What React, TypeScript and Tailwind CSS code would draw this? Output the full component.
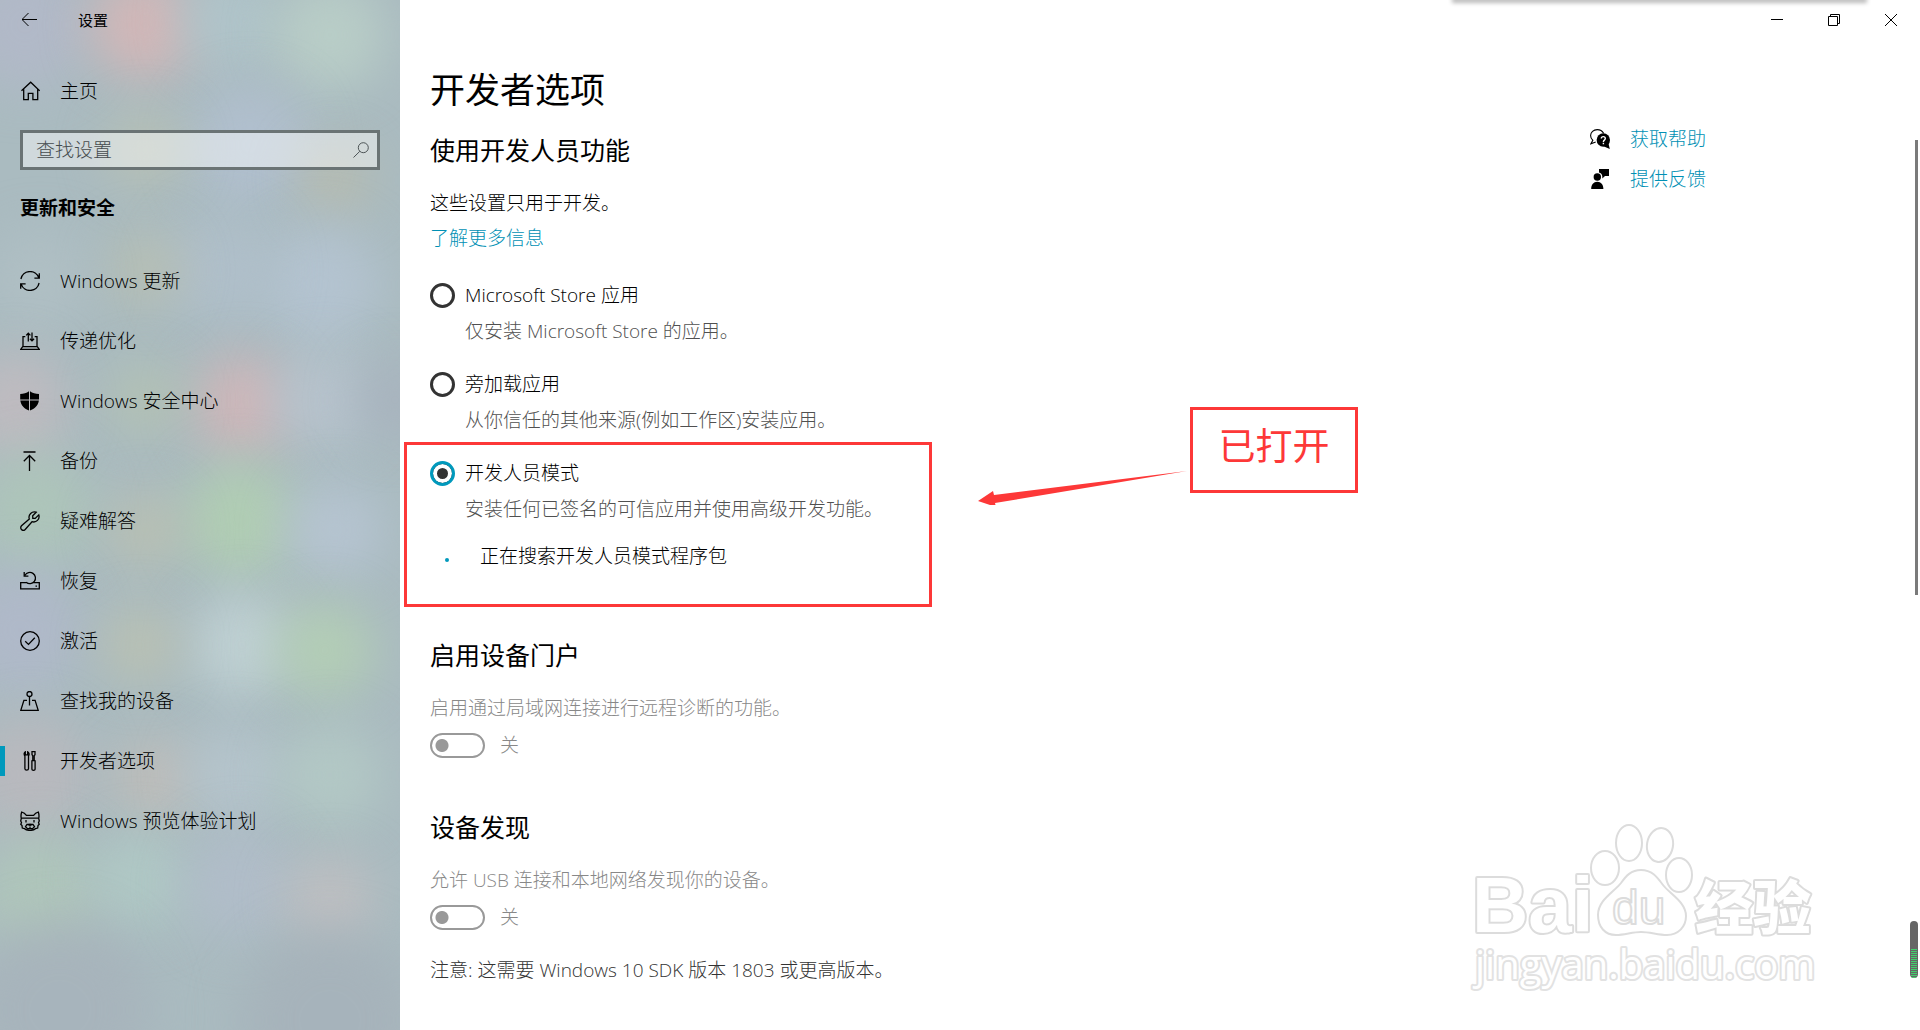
import { useState } from 'react'
import type { ReactNode } from 'react'

const blobs: [number, number, number, string][] = [
  [25, 25, 65, '#b3b9c9'], [145, 25, 54, '#d8b6b6'], [230, 20, 50, '#b0c6cb'], [330, 35, 56, '#bbd0c8'],
  [250, 145, 60, '#b2c0d0'], [145, 150, 38, '#bac1b2'], [335, 180, 36, '#b8bcae'],
  [320, 285, 60, '#b5c4d2'], [220, 270, 55, '#b0bfcb'], [145, 270, 38, '#b8c0b2'], [40, 280, 50, '#b0bfc4'],
  [15, 405, 54, '#c2bbbf'], [242, 405, 50, '#d4b6b8'], [145, 400, 38, '#b4c2b2'], [325, 400, 50, '#b9c4cf'],
  [240, 520, 58, '#b2d0b2'], [35, 510, 58, '#aec7b9'], [145, 530, 38, '#bbc1b0'], [335, 530, 48, '#b7c5d3'],
  [20, 630, 62, '#b0b8ca'], [242, 645, 52, '#c2d4d6'], [325, 650, 50, '#b4d0b4'], [140, 645, 38, '#bcc2b0'],
  [30, 775, 60, '#bbb8bd'], [155, 780, 42, '#c2bdb8'], [235, 775, 50, '#b6c6ce'], [330, 775, 52, '#b4cac6'],
  [40, 895, 60, '#b0c8ba'], [140, 880, 50, '#b0cac6'], [240, 885, 56, '#b2bdca'], [330, 900, 44, '#c2bfc2'],
  [60, 1010, 90, '#a7b3bb'], [330, 1020, 90, '#a6b2ba'], [395, 400, 40, '#a7b1bd'],
]

function Acrylic() {
  return (
    <svg className="absolute inset-0 -z-10 h-full w-full bg-[#aabbc0]" viewBox="0 0 400 1030" preserveAspectRatio="none" aria-hidden="true">
      <defs>
        <filter id="soft" x="-80%" y="-80%" width="260%" height="260%" colorInterpolationFilters="sRGB">
          <feGaussianBlur stdDeviation="24" />
        </filter>
      </defs>
      {blobs.map(([x, y, r, color], i) => (
        <circle key={i} cx={x} cy={y} r={r} fill={color} fillOpacity="0.85" filter="url(#soft)" />
      ))}
    </svg>
  )
}

function Icon({ children }: { children: ReactNode }) {
  return (
    <svg className="size-5 shrink-0" viewBox="0 0 20 20" fill="none" stroke="currentColor" strokeWidth="1.3" aria-hidden="true">
      {children}
    </svg>
  )
}

const navItems: { label: string; icon: ReactNode }[] = [
  {
    label: 'Windows 更新',
    icon: <Icon><path d="M.9 8A9.3 9.3 0 0 1 18.8 6.8M19.3 2.2v4.9h-4.9M19.1 12A9.3 9.3 0 0 1 1.2 13.2M.7 17.8v-4.9h4.9" /></Icon>,
  },
  {
    label: '传递优化',
    icon: <Icon><path d="M5.3 5.6H3v10M14.7 5.6H17v10M2.7 15.6h14.6l2 2.7H.7zM8.3 10.5V2.2M6.2 4.4l2.1-2.2 2.1 2.2M12 1.5v8.3M9.9 7.7 12 9.9l2.1-2.2" /></Icon>,
  },
  {
    label: 'Windows 安全中心',
    icon: (
      <Icon>
        <path fill="currentColor" stroke="none" d="M9 .2v8.4H.2V3C3.500 2.900 6.600 2 9 .2zM10 .2C12.400 2 15.500 2.900 19 3v5.600h-9zM.3 9.600H9v9.900C4.500 18 1 14.500.3 9.600zM10 9.600h8.900C18.200 14.500 14.500 18 10 19.500z" />
      </Icon>
    ),
  },
  { label: '备份', icon: <Icon><path d="M3.500 1h12M9.500 20V4.500M3.800 10.200l5.700-5.700 5.700 5.700" /></Icon> },
  {
    label: '疑难解答',
    icon: <Icon><path d="M16.200 1.200A5.400 5.400 0 0 0 9.300 8L1.500 14.800a2.600 2.600 0 1 0 3.700 3.700L12 10.700A5.400 5.400 0 0 0 18.800 3.900L15.200 7.400l-2.400-.1-.1-2.500z" /></Icon>,
  },
  {
    label: '恢复',
    icon: <Icon><path d="M6.800 11.600H.7v6.300h18.600v-6.300h-6.100M15.500 15.200h1.500M5 4.300a5.600 5.600 0 1 1 1.200 7M4.200 1v4.200h4.200" /></Icon>,
  },
  { label: '激活', icon: <Icon><circle cx="10" cy="10" r="9.300" /><path d="M5.200 10.200l3.300 3.200 6.300-6.600" /></Icon> },
  {
    label: '查找我的设备',
    icon: <Icon><circle cx="9.500" cy="3" r="2.500" /><path d="M9.500 5.500v9M7 9.300H3.900L.8 19.300h17.400L15.100 9.300H12" /></Icon>,
  },
  {
    label: '开发者选项',
    icon: (
      <Icon>
        <path d="M5.300.8v3h2.400v-3c1.400.7 1.900 2.700.8 4.200v12.800c0 1.900-3.600 1.900-3.600 0V5C3.700 3.500 4 1.500 5.300.8zM12 .7h3v3l-.8 1v5h-1.400v-5l-.8-1zM11.500 9.700h4M11.900 9.700v8.600c0 1.400 3.200 1.400 3.200 0V9.700" />
      </Icon>
    ),
  },
  {
    label: 'Windows 预览体验计划',
    icon: (
      <Icon>
        <path d="M1.700 1C1 3 .8 5.300 1.300 7.500L.7 10l.8 1.500-.7 1.800 1.200 1.200.3 2.600 2.300.6C6 19.200 8 19.400 10 19.400s4-.2 5.400-1.700l2.300-.6.300-2.600 1.200-1.200-.7-1.800.8-1.500-.6-2.500c.5-2.200.3-4.500-.4-6.500-2 .6-3.600 1.800-4.700 3.300H6.400C5.300 2.800 3.700 1.600 1.700 1zM1.300 7.200h17.400M6 9v2.500M14 9v2.500M7 13.500h6l1.500 2.200-2 2H7.500l-2-2zM10 15.500v2" />
        <path d="M8.600 13.800h2.800" strokeWidth="2" />
      </Icon>
    ),
  },
]

const modes = [
  { id: 'store', label: 'Microsoft Store 应用', desc: '仅安装 Microsoft Store 的应用。' },
  { id: 'sideload', label: '旁加载应用', desc: '从你信任的其他来源(例如工作区)安装应用。' },
  { id: 'developer', label: '开发人员模式', desc: '安装任何已签名的可信应用并使用高级开发功能。' },
]

function ModeOption({ mode, checked, onSelect }: { mode: (typeof modes)[number]; checked: boolean; onSelect: (id: string) => void }) {
  return (
    <div>
      <div className="flex items-center gap-[10px]">
        <input
          type="radio"
          name="mode"
          id={mode.id}
          checked={checked}
          onChange={() => onSelect(mode.id)}
          className="size-[25px] appearance-none rounded-full border-3 border-[#333] checked:border-[#0099bc] checked:bg-[#333] checked:shadow-[inset_0_0_0_4px_white]"
        />
        <label htmlFor={mode.id}>{mode.label}</label>
      </div>
      <p className="mt-2 pl-[35px] text-[#505050]">{mode.desc}</p>
    </div>
  )
}

function ToggleSection({ id, title, desc }: { id: string; title: string; desc: string }) {
  return (
    <section>
      <h2 className="text-[25px] leading-8 font-normal">{title}</h2>
      <p className="mt-[23px] text-[#888]" id={`${id}-desc`}>{desc}</p>
      <div className="mt-[9px] flex items-center gap-[15px] text-[#888]">
        <input
          type="checkbox"
          role="switch"
          id={id}
          disabled
          aria-describedby={`${id}-desc`}
          className="h-[25px] w-[55px] appearance-none rounded-full border-2 border-[#999] bg-[radial-gradient(circle_at_10px_center,#999_6px,transparent_7px)]"
        />
        <label htmlFor={id}>关</label>
      </div>
    </section>
  )
}

function Watermark() {
  return (
    <svg
      className="pointer-events-none absolute right-[90px] bottom-[30px] h-[180px] w-[360px]"
      viewBox="0 0 360 180"
      fill="white"
      stroke="#dcdcdc"
      strokeWidth="4"
      strokeLinejoin="round"
      aria-hidden="true"
    >
      <g paintOrder="stroke">
        <text x="2" y="112" fontSize="78" fontWeight="700" fontFamily="Liberation Sans, sans-serif">Bai</text>
        <text x="225" y="109" fontSize="58" fontWeight="900" fontFamily="Noto Sans CJK SC, sans-serif">经验</text>
        <text x="5" y="159" fontSize="40" fontWeight="500" stroke="#e2e2e2" fontFamily="Open Sans, sans-serif">jingyan.baidu.com</text>
      </g>
      <g strokeWidth="2">
        <ellipse cx="135" cy="48" rx="14" ry="17" />
        <ellipse cx="159" cy="23" rx="13" ry="18" />
        <ellipse cx="190" cy="25" rx="13" ry="17" transform="rotate(10 190 25)" />
        <ellipse cx="209" cy="55" rx="13" ry="17" />
        <path d="M171 50c-10 0-15 6-20 13-7 9-23 17-23 32 0 12 7 20 18 20 9 0 16-3 25-3s17 3 26 3c11 0 19-8 19-19 0-14-16-22-23-31-6-8-11-15-22-15z" />
        <text x="142" y="104" fontSize="48" fontWeight="400" fontFamily="Liberation Sans, sans-serif">du</text>
      </g>
    </svg>
  )
}

export default function App() {
  const [active, setActive] = useState('开发者选项')
  const [mode, setMode] = useState('developer')
  const [query, setQuery] = useState('')

  return (
    <div className="relative flex min-h-screen overflow-hidden bg-white font-['Open_Sans','Noto_Sans_CJK_SC',sans-serif] text-[19px] leading-7 font-light text-black">
      <aside className="relative isolate w-[400px] shrink-0 overflow-hidden">
        <Acrylic />
        <div className="flex h-10 items-center">
          <button aria-label="返回" className="flex h-10 w-[60px] items-center justify-center">
            <svg className="size-4" viewBox="0 0 16 16" fill="none" stroke="currentColor" aria-hidden="true">
              <path d="M15 7.500H0M6.500 1 0 7.500 6.500 14" />
            </svg>
          </button>
          <span className="pl-[18px] text-[15px] font-normal">设置</span>
        </div>
        <a href="#home" className="mt-[21px] flex h-[60px] items-center gap-5 px-5">
          <Icon><path d="M1.500 9.800 10.700 1.200l9 8.600M3.700 8v10.700h4.600v-6.400h4.600v6.400h4.800V8" /></Icon>
          主页
        </a>
        <div className="relative mx-5 mt-[9px]">
          <input
            type="search"
            aria-label="查找设置"
            value={query}
            onChange={e => setQuery(e.target.value)}
            placeholder="查找设置"
            className="h-10 w-full border-3 border-[#6a7374] bg-white/45 pr-10 pl-[13px] outline-none placeholder:text-[#454b4d]"
          />
          <svg className="absolute top-3 right-[11px] size-4" viewBox="0 0 16 16" fill="none" stroke="#4d5456" aria-hidden="true">
            <circle cx="10.300" cy="5.700" r="5" />
            <path d="M6.800 9.300.5 15.500" />
          </svg>
        </div>
        <h2 className="mt-6 px-5 font-bold">更新和安全</h2>
        <nav className="mt-[29px]">
          {navItems.map(item => (
            <a
              key={item.label}
              href="#settings"
              onClick={() => setActive(item.label)}
              aria-current={active === item.label ? 'page' : undefined}
              className="relative flex h-[60px] items-center gap-5 px-5"
            >
              {active === item.label && <span className="absolute left-0 h-[30px] w-[5px] bg-[#0099bc]" />}
              {item.icon}
              {item.label}
            </a>
          ))}
        </nav>
      </aside>

      <main className="min-w-0 flex-1">
        <header className="flex h-10 justify-end pr-px">
          <button aria-label="最小化" className="flex w-[57px] items-center justify-center">
            <svg className="size-3" viewBox="0 0 12 12" stroke="currentColor" aria-hidden="true"><path d="M0 5.500h12" /></svg>
          </button>
          <button aria-label="还原" className="flex w-[57px] items-center justify-center">
            <svg className="size-3" viewBox="0 0 12 12" fill="none" stroke="currentColor" aria-hidden="true"><path d="M.5 2.500h9v9h-9zM2.500 2.500v-2h9v9h-2" /></svg>
          </button>
          <button aria-label="关闭" className="flex w-[57px] items-center justify-center">
            <svg className="size-3" viewBox="0 0 12 12" stroke="currentColor" aria-hidden="true"><path d="M0 0l12 12M12 0 0 12" /></svg>
          </button>
        </header>

        <div className="flex justify-between">
          <div className="px-[30px] pt-7">
            <h1 className="text-[35px] leading-[44px] font-normal">开发者选项</h1>
            <h2 className="mt-[22px] text-[25px] leading-8 font-normal">使用开发人员功能</h2>
            <p className="mt-[23px]">这些设置只用于开发。</p>
            <a href="#more" className="mt-[7px] inline-block text-[#0090b4]">了解更多信息</a>

            <div className="mt-[29px] flex flex-col gap-[25px]">
              {modes.slice(0, 2).map(m => (
                <ModeOption key={m.id} mode={m} checked={mode === m.id} onSelect={setMode} />
              ))}
            </div>

            <div className="relative mt-2 -ml-[26px] w-[528px] border-3 border-[#fd3838] pt-[14px] pr-3 pb-[34px] pl-[23px]">
              <ModeOption mode={modes[2]} checked={mode === 'developer'} onSelect={setMode} />
              <div className="mt-[19px] flex items-center pl-[15px]" role="status">
                <span className="mt-2 mr-[31px] size-1 rounded-full bg-[#0099bc]" />
                正在搜索开发人员模式程序包
              </div>
              <svg className="absolute top-6 left-[571px] h-9 w-[212px]" viewBox="0 0 212 36" fill="#fd3838" aria-hidden="true">
                <path d="M0 32 15 22l1 4L209 2 17 34l1 4z" />
              </svg>
              <div className="absolute -top-[38px] left-[783px] w-[168px] border-3 border-[#fd3838] pt-2 pb-4 text-center text-[37px] leading-[56px] font-normal text-[#fd3838]">
                已打开
              </div>
            </div>

            <div className="mt-8 flex flex-col gap-[52px]">
              <ToggleSection id="portal" title="启用设备门户" desc="启用通过局域网连接进行远程诊断的功能。" />
              <ToggleSection id="discovery" title="设备发现" desc="允许 USB 连接和本地网络发现你的设备。" />
            </div>
            <p className="mt-[25px] text-[#333]">注意: 这需要 Windows 10 SDK 版本 1803 或更高版本。</p>
          </div>

          <div className="flex w-[330px] shrink-0 flex-col gap-3 pt-[85px] text-[#0090b4]">
            <a href="#help" className="flex items-center gap-5">
              <svg className="size-5 text-black" viewBox="0 0 20 20" fill="none" stroke="currentColor" strokeWidth="1.100" aria-hidden="true">
                <path d="M13.600 4.300C12.400 2 10 .6 7.200.6 3.500.6.600 3.200.600 6.600c0 2 .8 3.600 2.200 4.700L.9 14.800 5.700 13" />
                <circle cx="13.300" cy="11" r="6.700" fill="currentColor" stroke="none" />
                <path fill="currentColor" stroke="none" d="M14 17.500 19.800 20l-1.500-6z" />
                <path stroke="white" strokeWidth="1.400" d="M11.300 9.600c0-2.600 4-2.600 4 0 0 1.600-1.900 1.500-1.900 3.300M13.400 13.800v1.400" />
              </svg>
              获取帮助
            </a>
            <a href="#feedback" className="flex items-center gap-5">
              <svg className="size-5 text-black" viewBox="0 0 20 20" fill="currentColor" aria-hidden="true">
                <circle cx="7.300" cy="8" r="3.700" />
                <path d="M1.200 20c0-4.400 2.400-7.300 6.100-7.300s6.100 2.900 6.100 7.300zM9 0h10v7h-4l-2.700 2.500V7.300C12 5 10.800 3.900 9 3.500z" />
              </svg>
              提供反馈
            </a>
          </div>
        </div>
      </main>

      {/* edge of the window behind */}
      <div className="absolute -top-1 right-[54px] h-1 w-[413px] bg-[#ccc] shadow-[0_2px_4px_1px_#bbb]" />
      <div className="absolute top-[140px] right-[2px] h-[455px] w-[3px] bg-[#7a7a7a]" />
      <div className="absolute right-[2px] bottom-[52px] flex h-[57px] w-2 flex-col justify-end overflow-hidden rounded-full bg-[#666] px-px">
        <div className="h-[29px] bg-[repeating-linear-gradient(#42d06c_0_1px,#666_1px_2px)]" />
      </div>
      <Watermark />
    </div>
  )
}
